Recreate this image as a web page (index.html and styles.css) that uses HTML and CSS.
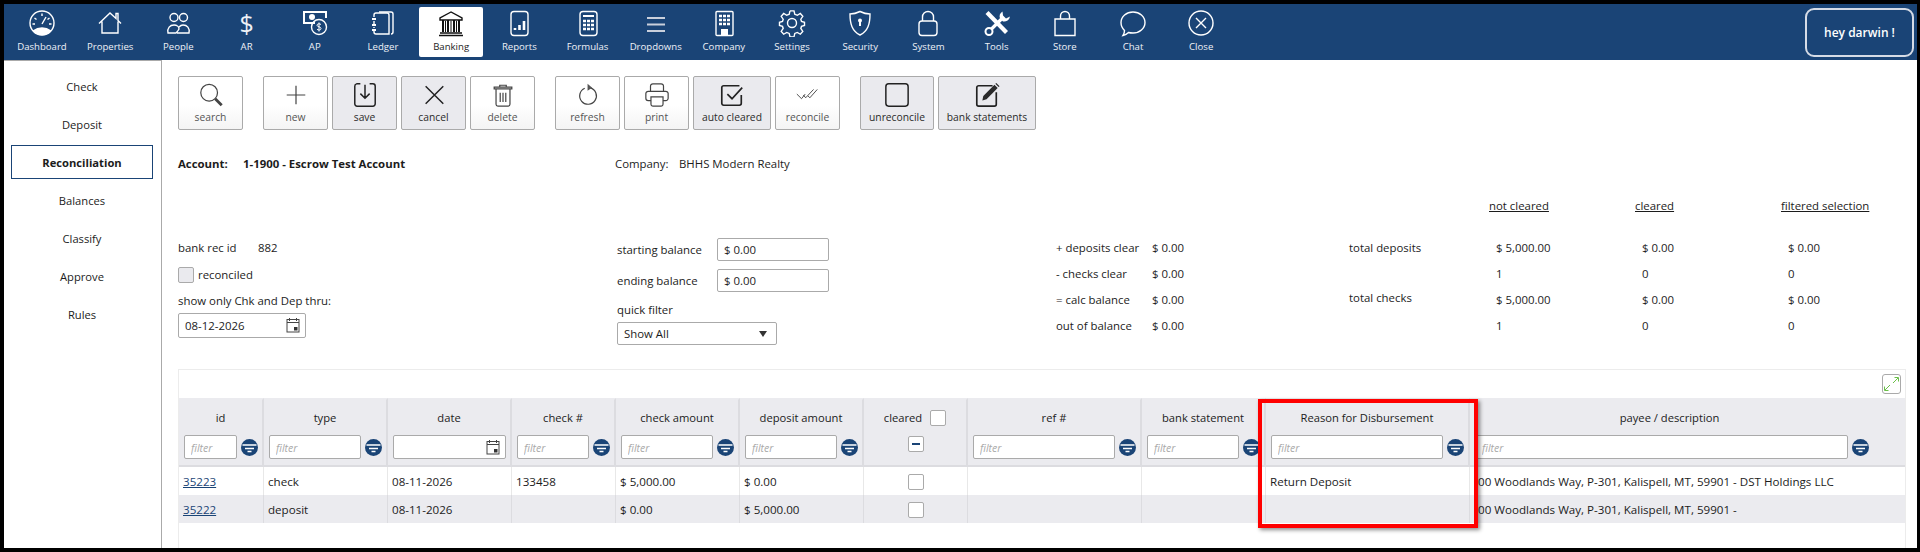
FILE: index.html
```html
<!DOCTYPE html>
<html lang="en">
<head>
  <meta charset="UTF-8">
  <title>Banking - Reconciliation</title>
  <link rel="stylesheet" href="styles.css">
</head>
<body>

<svg class="defs" width="0" height="0">
  <symbol id="filter-ico" viewBox="0 0 17 17">
    <circle cx="8.5" cy="8.5" r="8.5" fill="#1a4476"/>
    <path d="M1.5 6h14M4 9.5h9M6.5 12.5h4" stroke="#fff" stroke-width="1.5" fill="none"/>
  </symbol>
  <symbol id="cal-ico" viewBox="0 0 14 16">
    <rect x="1" y="2.5" width="12" height="12.5" fill="none" stroke="#444" stroke-width="1"/>
    <path d="M1 5.5h12M3.5 1v3M10.500 1v3" stroke="#444" stroke-width="1" fill="none"/>
    <rect x="8" y="10" width="3.500" height="3.500" fill="#333"/>
  </symbol>
</svg>

<div class="app">

  <!-- Top nav -->
  <header class="topbar">
    <nav class="nav">
      <a class="nav-item"><svg class="ico" viewBox="0 0 28 28"><circle cx="14" cy="14" r="12"/><path class="solid" d="M4.500 21.500A12 12 0 0 0 23.500 21.500Q14 15 4.500 21.500Z"/><path d="M14 15l4-7M14 4.500v2.500M6.500 9l2 1.500M21.500 9l-2 1.500M4.500 15h2.500M23.500 15H21"/></svg><span>Dashboard</span></a>
      <a class="nav-item"><svg class="ico" viewBox="0 0 28 28"><path d="M3 14.500L14 4l6 5.500V4.500h2v7l3 3M6 12.500V24h16V12.500"/></svg><span>Properties</span></a>
      <a class="nav-item"><svg class="ico" viewBox="0 0 28 28"><circle cx="10" cy="8.500" r="4"/><circle cx="19.500" cy="8.500" r="4"/><path d="M4 24c-1-5 2-8 6-8 3 0 5 2 5 4-1 2-2 3-3 4zM13 24h12c1-5-2-8-6-8-2 0-3 1-4 2"/></svg><span>People</span></a>
      <a class="nav-item"><span class="nav-glyph">$</span><span>AR</span></a>
      <a class="nav-item"><svg class="ico" viewBox="0 0 28 28"><path class="heavy" d="M14 14H3V3h22v6"/><circle class="solid" cx="11" cy="8" r="3"/><circle cx="18" cy="18" r="7.500"/><path class="thin" d="M20 15.500c-1-1-4-1-4 .8s4 1.200 4 3.200-3 1.800-4 .8M18 13.500v9"/></svg><span>AP</span></a>
      <a class="nav-item"><svg class="ico" viewBox="0 0 28 28"><path d="M10 3h12a2 2 0 0 1 2 2v18a2 2 0 0 1-2 2"/><path d="M5 8V6a2 2 0 0 1 2-2h11a2 2 0 0 1 2 2v19H7a2 2 0 0 1-2-2v-1M5 12v3M5 18v1"/><path class="heavy" d="M3 10h4M3 16h4M3 21h4"/></svg><span>Ledger</span></a>
      <a class="nav-item active"><svg class="ico" viewBox="0 0 28 28"><path d="M14 3L3 9v2h22V9zM3 24h22M2 26.500h24"/><path class="heavy" d="M6 11v12M11 11v12M17 11v12M22 11v12"/><path class="thin" d="M8.500 12v11M14 12v11M19.500 12v11"/></svg><span>Banking</span></a>
      <a class="nav-item"><svg class="ico" viewBox="0 0 28 28"><rect x="6" y="2.500" width="17" height="24" rx="3"/><path class="bars" d="M10 21v-2M14.500 21v-5M19 21v-9"/></svg><span>Reports</span></a>
      <a class="nav-item"><svg class="ico" viewBox="0 0 28 28"><rect x="6" y="2.500" width="17" height="24" rx="3"/><path class="heavy" d="M9 7h11"/><path class="dots" d="M9 12h3M13 12h3M17 12h3M9 16h3M13 16h3M17 16h3M9 20h3M13 20h3M17 20h3"/></svg><span>Formulas</span></a>
      <a class="nav-item"><svg class="ico muted" viewBox="0 0 28 28"><path class="heavy" d="M5 9h18M5 15.500h18M5 22h18"/></svg><span>Dropdowns</span></a>
      <a class="nav-item"><svg class="ico" viewBox="0 0 28 28"><rect x="6" y="2.500" width="17" height="24" rx="1"/><path class="dots" d="M9 7h3M13 7h3M17 7h3M9 11h3M13 11h3M17 11h3M9 15h3M13 15h3M17 15h3"/><rect class="solid" x="11" y="20" width="7" height="6"/></svg><span>Company</span></a>
      <a class="nav-item"><svg class="ico" viewBox="0 0 28 28"><circle cx="14" cy="14" r="4.500"/><path d="M12 2.500h4l.8 3.500 2.500 1 3-1.800 2.500 3-2 3 .7 2.300 3 .9v3.200l-3 .9-.7 2.300 2 3-2.500 3-3-1.800-2.500 1-.8 3.500" transform="translate(0 -.5) scale(1 .96)"/><path d="M12 2.500l-.8 3.500-2.500 1-3-1.800-2.500 3 2 3-.7 2.300-3 .9v3.200l3 .9.700 2.300-2 3 2.500 3 3-1.800 2.500 1 .8 3.500h4" transform="translate(0 -.5) scale(1 .96)"/></svg><span>Settings</span></a>
      <a class="nav-item"><svg class="ico" viewBox="0 0 28 28"><path d="M14 2.500c4 2 7 2.500 10 2.500 0 10-2 17-10 21C6 22 4 15 4 5c3 0 6-.5 10-2.500z"/><circle class="solid" cx="14" cy="11.500" r="2"/><path class="heavy" d="M14 12v5"/></svg><span>Security</span></a>
      <a class="nav-item"><svg class="ico" viewBox="0 0 28 28"><rect x="5" y="12" width="18" height="14.500" rx="3"/><path d="M8.500 12V8a5.500 5.500 0 0 1 11 0v4"/></svg><span>System</span></a>
      <a class="nav-item"><svg class="ico" viewBox="0 0 28 28"><path class="tool" d="M4 3.500l19.500 20"/><path class="solid" d="M19.500 2.500a6 6 0 0 0-2.500 7l3 3a6 6 0 0 0 7-5l-4 2-3-3z"/><path class="wrench" d="M18.500 10L8.500 20"/><circle class="heavy" cx="6" cy="22.500" r="3.500"/></svg><span>Tools</span></a>
      <a class="nav-item"><svg class="ico" viewBox="0 0 28 28"><path d="M4 10h20v16.500H4zM9.500 10V7a4.500 4.500 0 0 1 9 0v3"/></svg><span>Store</span></a>
      <a class="nav-item"><svg class="ico" viewBox="0 0 28 28"><path d="M14 3c6.500 0 12 4.500 12 10.500S20.500 24 14 24c-2 0-3 0-4.500-.5-1.500 1.500-3 2.500-5.500 3 1-1.500 1.500-3 1.500-5C3.500 19.500 2 17 2 13.500 2 7.500 7.500 3 14 3z"/></svg><span>Chat</span></a>
      <a class="nav-item"><svg class="ico" viewBox="0 0 28 28"><circle cx="14" cy="14" r="12"/><path d="M9 9l10 10M19 9L9 19"/></svg><span>Close</span></a>
    </nav>
    <div class="user-box">hey darwin !</div>
  </header>

  <div class="body-wrap">

    <!-- Side menu -->
    <aside class="side">
      <a class="side-item">Check</a>
      <a class="side-item">Deposit</a>
      <a class="side-item current">Reconciliation</a>
      <a class="side-item">Balances</a>
      <a class="side-item">Classify</a>
      <a class="side-item">Approve</a>
      <a class="side-item">Rules</a>
    </aside>

    <main class="main">

      <div class="toolbar">
        <div class="tool-group">
          <button class="btn"><svg class="btn-ico" viewBox="0 0 28 28"><circle cx="12" cy="11.500" r="9"/><path class="thick" d="M18.500 18l7 7"/></svg>search</button>
        </div>
        <div class="tool-group">
          <button class="btn"><svg class="btn-ico" viewBox="0 0 28 28"><path d="M14 4v20M4 14h20"/></svg>new</button>
          <button class="btn on"><svg class="btn-ico" viewBox="0 0 28 28"><path d="M9 2H5a2.500 2.500 0 0 0-2 2.500v19A2.500 2.500 0 0 0 5.500 26h17a2.500 2.500 0 0 0 2.500-2.500v-19A2.500 2.500 0 0 0 22.500 2H19M14 3v14M9 12.500l5 5 5-5"/></svg>save</button>
          <button class="btn on"><svg class="btn-ico" viewBox="0 0 28 28"><path d="M5 4.500l19 19M24 4.500l-19 19"/></svg>cancel</button>
          <button class="btn"><svg class="btn-ico" viewBox="0 0 28 28"><path d="M4.500 5.500h19v2h-19zM10.500 5V3.500h7V5M6.500 8v16a2 2 0 0 0 2 2h11a2 2 0 0 0 2-2V8M11 11.500v10M14 11.500v10M17 11.500v10"/></svg>delete</button>
        </div>
        <div class="tool-group">
          <button class="btn"><svg class="btn-ico" viewBox="0 0 28 28"><path d="M16.500 6.300A9 9 0 1 1 10.500 6.700"/><path class="fill" d="M13.500 2l5 4.200-5 3.300z"/></svg>refresh</button>
          <button class="btn"><svg class="btn-ico" viewBox="0 0 28 28"><path d="M7 10V4.500A2.500 2.500 0 0 1 9.500 2h9A2.500 2.500 0 0 1 21 4.500V10M7 20H4.500A2.500 2.500 0 0 1 2 17.500v-5A2.500 2.500 0 0 1 4.500 10h19a2.500 2.500 0 0 1 2.500 2.500v5a2.500 2.500 0 0 1-2.500 2.500H21M7.500 16h13v8a2 2 0 0 1-2 2h-9a2 2 0 0 1-2-2z"/></svg>print</button>
          <button class="btn wide-78 on"><svg class="btn-ico" viewBox="0 0 28 28"><path class="mid" d="M24 14v9a2 2 0 0 1-2 2H5a2 2 0 0 1-2-2V6a2 2 0 0 1 2-2h17M9 13l5 5 11-12"/></svg>auto cleared</button>
          <button class="btn"><svg class="btn-ico" viewBox="0 0 28 28"><path class="small" d="M2 13l5 5 4-5M9 14l2.500 3L20 8M14 15l2 2 8-9"/></svg>reconcile</button>
        </div>
        <div class="tool-group">
          <button class="btn wide-74 on"><svg class="btn-ico" viewBox="0 0 28 28"><rect x="2" y="2" width="24" height="24" rx="3"/></svg>unreconcile</button>
          <button class="btn wide-98 on"><svg class="btn-ico" viewBox="0 0 28 28"><path class="mid" d="M20 4H5a2 2 0 0 0-2 2v18a2 2 0 0 0 2 2h17a2 2 0 0 0 2-2V11"/><path class="fill" d="M10 15L22 3l3.500 3.500-12 12L9 20zM23 2l1-1 3.500 3.500-1 1z"/></svg>bank statements</button>
        </div>
      </div>

      <div class="account-row">
        <div class="account"><span class="account-label">Account:</span>1-1900 - Escrow Test Account</div>
        <div class="company"><span class="company-label">Company:</span>BHHS Modern Realty</div>
      </div>

      <div class="summary">
        <div class="col-rec">
          <div class="rec-id"><span class="rec-id-label">bank rec id</span>882</div>
          <label class="rec-check"><input class="box grey" type="checkbox">reconciled</label>
          <div class="thru-label">show only Chk and Dep thru:</div>
          <div class="date-field"><input class="date-input" type="text" value="08-12-2026"><svg class="cal"><use href="#cal-ico"/></svg></div>
        </div>

        <div class="col-bal">
          <div class="bal-row"><label class="bal-label">starting balance</label><input class="bal-input" type="text" value="$ 0.00"></div>
          <div class="bal-row"><label class="bal-label">ending balance</label><input class="bal-input" type="text" value="$ 0.00"></div>
          <div class="quick-label">quick filter</div>
          <div class="select-box">Show All<span class="caret"></span></div>
        </div>

        <div class="col-calc">
          <div class="calc-row"><span>+ deposits clear</span><span>$ 0.00</span></div>
          <div class="calc-row"><span>- checks clear</span><span>$ 0.00</span></div>
          <div class="calc-row"><span>= calc balance</span><span>$ 0.00</span></div>
          <div class="calc-row"><span>out of balance</span><span>$ 0.00</span></div>
        </div>

        <div class="col-tot">
          <div class="tot-head"><span></span><u>not cleared</u><u>cleared</u><u>filtered selection</u></div>
          <div class="tot-row"><span>total deposits</span><span>$ 5,000.00</span><span>$ 0.00</span><span>$ 0.00</span></div>
          <div class="tot-row"><span></span><span>1</span><span>0</span><span>0</span></div>
          <div class="tot-row"><span class="raised">total checks</span><span>$ 5,000.00</span><span>$ 0.00</span><span>$ 0.00</span></div>
          <div class="tot-row"><span></span><span>1</span><span>0</span><span>0</span></div>
        </div>
      </div>

      <div class="grid-panel">
        <div class="grid-bar">
          <button class="expand"><svg viewBox="0 0 19 20" width="19" height="20"><path d="M11 9l5-5M12.500 3.500h4v4M8 11l-5 5M2.500 12.500v4h4" fill="none" stroke="#6cc04a" stroke-width="1"/></svg></button>
        </div>
        <table class="grid">
          <colgroup>
            <col class="w85"><col class="w124"><col class="w124"><col class="w104"><col class="w124"><col class="w124"><col class="w104"><col class="w174"><col class="w124"><col class="w204"><col>
          </colgroup>
          <thead>
            <tr>
              <th><div class="th-title">id</div><div class="th-filter"><input placeholder="filter"><svg class="fl"><use href="#filter-ico"/></svg></div></th>
              <th><div class="th-title">type</div><div class="th-filter"><input placeholder="filter"><svg class="fl"><use href="#filter-ico"/></svg></div></th>
              <th><div class="th-title">date</div><div class="th-filter"><div class="date-field"><input class="date-input"><svg class="cal"><use href="#cal-ico"/></svg></div></div></th>
              <th><div class="th-title">check #</div><div class="th-filter"><input placeholder="filter"><svg class="fl"><use href="#filter-ico"/></svg></div></th>
              <th><div class="th-title">check amount</div><div class="th-filter"><input placeholder="filter"><svg class="fl"><use href="#filter-ico"/></svg></div></th>
              <th><div class="th-title">deposit amount</div><div class="th-filter"><input placeholder="filter"><svg class="fl"><use href="#filter-ico"/></svg></div></th>
              <th><div class="th-title cleared-title">cleared<input class="box" type="checkbox"></div><div class="th-filter center"><span class="box minus"></span></div></th>
              <th><div class="th-title">ref #</div><div class="th-filter"><input placeholder="filter"><svg class="fl"><use href="#filter-ico"/></svg></div></th>
              <th><div class="th-title">bank statement</div><div class="th-filter"><input placeholder="filter"><svg class="fl"><use href="#filter-ico"/></svg></div></th>
              <th><div class="th-title">Reason for Disbursement</div><div class="th-filter"><input placeholder="filter"><svg class="fl"><use href="#filter-ico"/></svg></div></th>
              <th class="last-col"><div class="th-title">payee / description</div><div class="th-filter"><input placeholder="filter"><svg class="fl"><use href="#filter-ico"/></svg></div></th>
            </tr>
          </thead>
          <tbody>
            <tr>
              <td><a class="row-link">35223</a></td><td>check</td><td>08-11-2026</td><td>133458</td><td>$ 5,000.00</td><td>$ 0.00</td>
              <td class="center"><input class="box" type="checkbox"></td><td></td><td></td><td>Return Deposit</td>
              <td class="payee">00 Woodlands Way, P-301, Kalispell, MT, 59901 - DST Holdings LLC</td>
            </tr>
            <tr>
              <td><a class="row-link">35222</a></td><td>deposit</td><td>08-11-2026</td><td></td><td>$ 0.00</td><td>$ 5,000.00</td>
              <td class="center"><input class="box" type="checkbox"></td><td></td><td></td><td></td>
              <td class="payee">00 Woodlands Way, P-301, Kalispell, MT, 59901 -</td>
            </tr>
          </tbody>
        </table>
        <!-- annotation over the Reason column -->
        <div class="red-box"></div>
      </div>

    </main>
  </div>
</div>

</body>
</html>
```

FILE: styles.css
```css
html, body {
  margin: 0;
  padding: 0;
  height: 552px;
  overflow: hidden;
  background: #000;
  color: #1c1c1c;
  font-family: "Open Sans", "Noto Sans", sans-serif;
  font-size: 11.4px;
}

.defs {
  position: absolute;
}

.app {
  margin: 4px 3px 4px 4px;
  height: 544px;
  background: #fff;
  display: flex;
  flex-direction: column;
}

/* top nav */
.topbar {
  height: 56px;
  flex: none;
  background: #1a4476;
  display: flex;
  align-items: center;
  justify-content: space-between;
  padding: 0 3px 0 6px;
  box-sizing: border-box;
}

.nav {
  display: flex;
  gap: 4.2px;
}

.nav-item {
  width: 64px;
  height: 50px;
  display: flex;
  flex-direction: column;
  align-items: center;
  color: #eef1f6;
  font-size: 9.6px;
  line-height: 14px;
  border-radius: 2px;
  padding-top: 2px;
  box-sizing: border-box;
}

.nav-item.active {
  background: #fff;
  color: #222;
}

.nav-glyph {
  height: 28px;
  font-size: 25px;
  line-height: 28px;
  margin-bottom: 3px;
}

.ico {
  width: 28px;
  height: 28px;
  margin-bottom: 3px;
  fill: none;
  stroke: #fff;
  stroke-width: 1.4;
}

.active .ico {
  stroke: #111;
}

.ico.muted {
  stroke: #c9d0dc;
}

.ico .solid {
  fill: #fff;
  stroke: none;
}

.ico .heavy {
  stroke-width: 2;
}

.ico .thin {
  stroke-width: 1;
}

.ico .bars {
  stroke-width: 2.6;
}

.ico .dots {
  stroke-width: 2.4;
}

.ico .tool {
  stroke-width: 4.2;
}

.ico .wrench {
  stroke-width: 3.2;
}

.user-box {
  width: 109px;
  height: 49px;
  box-sizing: border-box;
  border: 2px solid #d6dce6;
  border-radius: 9px;
  color: #fff;
  font-size: 12px;
  font-weight: 600;
  display: flex;
  align-items: center;
  justify-content: center;
}

.body-wrap {
  flex: 1;
  display: flex;
  min-height: 0;
}

/* side menu */
.side {
  width: 158px;
  flex: none;
  box-sizing: border-box;
  border-top: 1px solid #aaa;
  border-right: 1px solid #aaa;
  padding: 8px 8px 0 7px;
  display: flex;
  flex-direction: column;
  gap: 4px;
}

.side-item {
  height: 34px;
  box-sizing: border-box;
  display: flex;
  align-items: center;
  justify-content: center;
  font-size: 11.2px;
}

.side-item.current {
  border: 1px solid #1a4476;
  font-weight: 700;
}

.main {
  flex: 1;
  min-width: 0;
  padding: 16px 11px 0 16px;
  display: flex;
  flex-direction: column;
}

/* toolbar */
.toolbar {
  display: flex;
  gap: 20px;
}

.tool-group {
  display: flex;
  gap: 4px;
}

.btn {
  width: 65px;
  height: 54px;
  padding: 5px 0 0;
  border: 1px solid #aaa;
  border-radius: 2px;
  background: linear-gradient(#fff 55%, #f4f4f4);
  color: #555;
  font: 10.3px/14px "Open Sans", sans-serif;
  display: flex;
  flex-direction: column;
  align-items: center;
  gap: 2px;
}

.btn.on {
  background: #eaeaee;
  color: #2a2a2a;
}

.wide-74 { width: 74px; }
.wide-78 { width: 78px; }
.wide-98 { width: 98px; }

.btn-ico {
  width: 26px;
  height: 26px;
  fill: none;
  stroke: #444;
  stroke-width: 1.3;
}

.on .btn-ico {
  stroke: #222;
  stroke-width: 1.6;
}

.btn-ico .thick { stroke-width: 3; }
.btn-ico .mid { stroke-width: 1.8; }
.btn-ico .small { stroke-width: 1; }

.btn-ico .fill {
  fill: currentColor;
  stroke: none;
}

/* account line */
.account-row {
  display: flex;
  margin-top: 26px;
  height: 16px;
  line-height: 16px;
}

.account {
  width: 437px;
  font-weight: 700;
}

.account-label {
  display: inline-block;
  width: 65px;
}

.company-label {
  display: inline-block;
  width: 64px;
}

/* summary block */
.summary {
  display: grid;
  grid-template-columns: 439px 439px 293px 1fr;
  margin-top: 26px;
  line-height: 16px;
}

.col-rec {
  padding-top: 42px;
}

.rec-id-label {
  display: inline-block;
  width: 80px;
}

.box {
  appearance: none;
  margin: 0;
  width: 16px;
  height: 16px;
  flex: none;
  display: block;
  box-sizing: border-box;
  border: 1px solid #aaa;
  border-radius: 2px;
  background: #fff;
}

.box.grey {
  background: #eaeaee;
}

.rec-check {
  display: flex;
  align-items: center;
  gap: 4px;
  margin-top: 11px;
}

.thru-label {
  margin-top: 10px;
}

.date-field {
  position: relative;
  width: 128px;
  height: 25px;
  margin-top: 4px;
}

.date-input {
  width: 100%;
  height: 100%;
  box-sizing: border-box;
  border: 1px solid #aaa;
  border-radius: 2px;
  padding: 0 6px;
  font: 11.4px "Open Sans", sans-serif;
  color: #1c1c1c;
}

.cal {
  position: absolute;
  right: 6px;
  top: 4px;
  width: 14px;
  height: 16px;
}

.col-bal {
  padding-top: 40px;
}

.bal-row {
  display: flex;
  align-items: center;
  height: 23px;
  margin-bottom: 8px;
}

.bal-label {
  width: 100px;
  padding-top: 1px;
}

.bal-input {
  width: 112px;
  height: 23px;
  box-sizing: border-box;
  border: 1px solid #aaa;
  border-radius: 2px;
  padding: 0 6px;
  font: 11.4px "Open Sans", sans-serif;
  color: #1c1c1c;
}

.quick-label {
  margin-top: 10px;
}

.select-box {
  position: relative;
  width: 160px;
  height: 23px;
  margin-top: 4px;
  box-sizing: border-box;
  border: 1px solid #aaa;
  border-radius: 2px;
  padding: 0 6px;
  line-height: 21px;
}

.caret {
  position: absolute;
  right: 9px;
  top: 8px;
  border-left: 4px solid transparent;
  border-right: 4px solid transparent;
  border-top: 6px solid #333;
}

.col-calc {
  padding-top: 37px;
}

.calc-row {
  display: grid;
  grid-template-columns: 96px 1fr;
  height: 26px;
  line-height: 26px;
}

.tot-head,
.tot-row {
  display: grid;
  grid-template-columns: 140px 146px 146px 1fr;
}

.tot-head {
  height: 16px;
  margin-bottom: 21px;
}

.tot-row {
  height: 26px;
  line-height: 26px;
}

.tot-row span:not(:first-child) {
  padding-left: 7px;
}

.raised {
  margin-top: -2px;
}

/* table */
.grid-panel {
  position: relative;
  flex: 1;
  margin-top: 24px;
  border: 1px solid #ececec;
  border-bottom: 0;
}

.grid-bar {
  height: 28px;
  display: flex;
  justify-content: flex-end;
  align-items: flex-start;
  padding: 4px 4px 0 0;
  box-sizing: border-box;
}

.expand {
  width: 19px;
  height: 20px;
  padding: 0;
  border: 1px solid #aaa;
  border-radius: 3px;
  background: #fff;
}

.expand svg {
  display: block;
  margin: -1px;
}

.grid {
  width: 1726px;
  table-layout: fixed;
  border-collapse: separate;
  border-spacing: 0;
}

.w85 { width: 85px; }
.w104 { width: 104px; }
.w124 { width: 124px; }
.w174 { width: 174px; }
.w204 { width: 204px; }

.grid th {
  padding: 0;
  font-weight: 400;
  font-size: 11.2px;
  background: #ebebef;
  border-top: 2px solid #ebebef;
  border-right: 2px solid #dcdce0;
  border-bottom: 2px solid #dcdce0;
  vertical-align: top;
}

.grid th.last-col {
  border-right: 0;
  padding-right: 36px;
}

.th-title {
  height: 35px;
  line-height: 35px;
  text-align: center;
}

.cleared-title {
  display: flex;
  align-items: center;
  justify-content: center;
  gap: 8px;
}

.th-filter {
  height: 24px;
  padding: 0 4px 6px 5px;
  display: flex;
  align-items: center;
  gap: 4px;
}

.last-col .th-filter {
  padding-right: 0;
}

.th-filter.center {
  justify-content: center;
  align-items: flex-start;
  padding-top: 1px;
  height: 23px;
}

.th-filter input {
  flex: 1;
  min-width: 0;
  height: 24px;
  box-sizing: border-box;
  border: 1px solid #aaa;
  border-radius: 2px;
  padding: 1px 6px 0;
  font: italic 10.5px "Open Sans", sans-serif;
}

.th-filter input::placeholder {
  color: #aaa;
}

.th-filter .date-field {
  width: 100%;
  height: 24px;
  margin: 0;
}

.fl {
  width: 17px;
  height: 17px;
  flex: none;
}

.minus {
  position: relative;
}

.minus::after {
  content: "";
  position: absolute;
  left: 3px;
  right: 3px;
  top: 6px;
  height: 2px;
  background: #1a4476;
}

.grid td {
  height: 28px;
  padding: 1px 4px 0;
  box-sizing: border-box;
  font-size: 11.6px;
  border-right: 1px solid #e8e8e8;
  white-space: nowrap;
  overflow: hidden;
}

.grid td:last-child {
  border-right: 0;
}

.grid tbody tr:nth-child(2) td {
  background: #ebebef;
  border-right-color: #dcdce0;
}

.grid td.center .box {
  margin: 0 auto;
}

.grid td.payee {
  padding-left: 8px;
}

.row-link {
  color: #1a4476;
  text-decoration: underline;
}

.red-box {
  position: absolute;
  left: 1079px;
  top: 29px;
  width: 220px;
  height: 129px;
  box-sizing: border-box;
  border: 4px solid #f00;
  box-shadow: 2px 2px 4px rgba(0, 0, 0, 0.45);
  pointer-events: none;
}
```
